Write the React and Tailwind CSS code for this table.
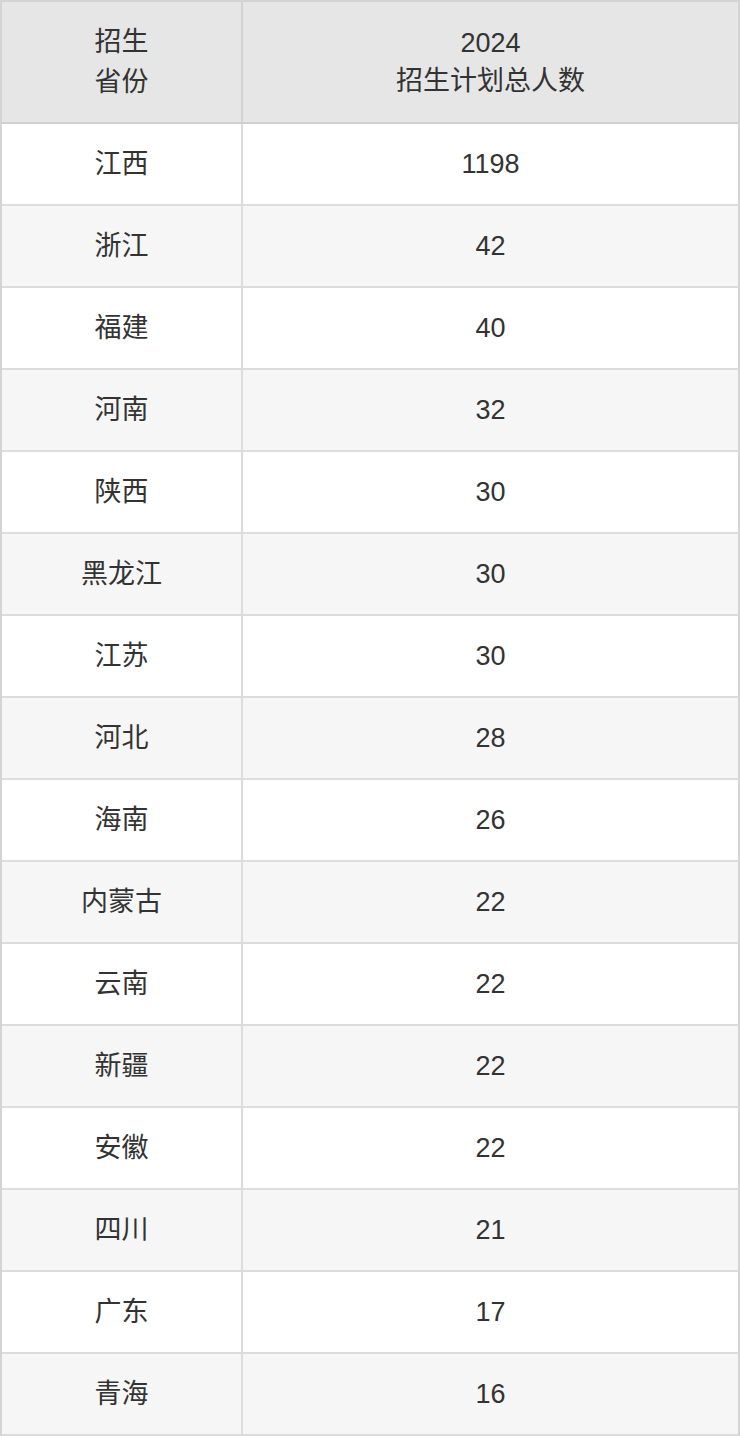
import React from "react";

const rows = [
  ["江西", "1198"],
  ["浙江", "42"],
  ["福建", "40"],
  ["河南", "32"],
  ["陕西", "30"],
  ["黑龙江", "30"],
  ["江苏", "30"],
  ["河北", "28"],
  ["海南", "26"],
  ["内蒙古", "22"],
  ["云南", "22"],
  ["新疆", "22"],
  ["安徽", "22"],
  ["四川", "21"],
  ["广东", "17"],
  ["青海", "16"],
];

export default function App() {
  return (
    <div
      className="w-[740px] bg-white text-[#333] text-[27px]"
      style={{ fontFamily: '"Liberation Sans", "Noto Sans CJK SC", sans-serif' }}
    >
      <div className="border-2 border-[#d4d4d4] border-b-0">
        {/* Header */}
        <div className="grid grid-cols-[241px_1fr] bg-[#e6e6e6] border-b-2 border-[#cfcfcf] h-[122px]">
          <div className="flex flex-col items-center justify-center border-r-2 border-[#d2d2d2] leading-[40px]">
            <span>招生</span>
            <span>省份</span>
          </div>
          <div className="flex flex-col items-center justify-center leading-[38px]">
            <span>2024</span>
            <span>招生计划总人数</span>
          </div>
        </div>

        {/* Body */}
        {rows.map(([prov, num], i) => (
          <div
            key={prov}
            className={`grid grid-cols-[241px_1fr] h-[82px] border-b-2 border-[#dcdcdc] ${
              i % 2 === 0 ? "bg-white" : "bg-[#f6f6f6]"
            }`}
          >
            <div className="flex items-center justify-center border-r-2 border-[#dcdcdc]">{prov}</div>
            <div className="flex items-center justify-center">{num}</div>
          </div>
        ))}
      </div>
    </div>
  );
}
